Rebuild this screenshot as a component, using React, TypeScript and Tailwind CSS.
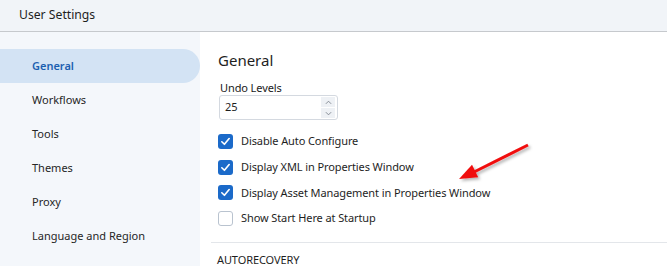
import React from "react";

const navItems = ["General", "Workflows", "Tools", "Themes", "Proxy", "Language and Region"];

const options = [
  { label: "Disable Auto Configure", checked: true },
  { label: "Display XML in Properties Window", checked: true },
  { label: "Display Asset Management in Properties Window", checked: true },
  { label: "Show Start Here at Startup", checked: false },
];

const Checkbox = ({ checked }: { checked: boolean }) =>
  checked ? (
    <span className="flex h-[15px] w-[15px] shrink-0 items-center justify-center rounded-[3px] bg-[#1b6ac9]">
      <svg width="11" height="11" viewBox="0 0 12 12" fill="none">
        <path d="M2 6.3L4.8 9L10 2.8" stroke="#fff" strokeWidth="1.8" strokeLinecap="round" strokeLinejoin="round" />
      </svg>
    </span>
  ) : (
    <span className="h-[15px] w-[15px] shrink-0 rounded-[3px] border border-[#b9c3cf] bg-white" />
  );

export default function App() {
  return (
    <div
      className="relative flex h-[266px] w-[667px] flex-col overflow-hidden bg-white text-[#1e1e1e]"
      style={{ fontFamily: '"Noto Sans", sans-serif' }}
    >
      <header className="flex h-[32px] shrink-0 items-center border-b border-[#c6c9cd] bg-[#f1f4f8] pl-[19px] text-[12.2px]">
        User Settings
      </header>
      <div className="flex flex-1">
        <nav className="flex w-[200px] shrink-0 flex-col bg-[#f4f7fb] pt-[17px]">
          {navItems.map((item, i) => (
            <div
              key={item}
              className={
                i === 0
                  ? "flex h-[34px] items-center rounded-r-[17px] bg-[#d3e3f4] pl-[32px] text-[11px] font-semibold text-[#1c5fb0]"
                  : "flex h-[34px] items-center pl-[32px] text-[11px] text-[#262626]"
              }
            >
              {item}
            </div>
          ))}
        </nav>
        <main className="flex flex-1 flex-col pl-[18px] pt-[17px] text-[11px] tracking-[-0.1px]">
          <h1 className="text-[15px] leading-[22px] tracking-normal text-[#1e1e1e]">General</h1>
          <label className="mt-[10px] pl-[2px] leading-[14px] text-[#1a1a1a]">Undo Levels</label>
          <div className="ml-[1px] flex h-[25px] w-[119px] items-center justify-between rounded-[3px] border border-[#d4d9e0] pl-[5px] pr-[2px]">
            <span>25</span>
            <div className="flex h-full flex-col justify-center gap-[1px] py-[1px]">
              <span className="flex h-[10px] w-[14px] items-center justify-center bg-[#eef1f5] text-[#7a808a]">
                <svg width="7" height="5" viewBox="0 0 8 5" fill="none">
                  <path d="M1 4L4 1L7 4" stroke="currentColor" strokeWidth="1" />
                </svg>
              </span>
              <span className="flex h-[10px] w-[14px] items-center justify-center bg-[#eef1f5] text-[#7a808a]">
                <svg width="7" height="5" viewBox="0 0 8 5" fill="none">
                  <path d="M1 1L4 4L7 1" stroke="currentColor" strokeWidth="1" />
                </svg>
              </span>
            </div>
          </div>
          <div className="mt-[14px] flex flex-col gap-[10.7px]">
            {options.map((o) => (
              <div key={o.label} className="flex h-[15px] items-center gap-[8px]">
                <Checkbox checked={o.checked} />
                <span>{o.label}</span>
              </div>
            ))}
          </div>
          <div className="-ml-[7px] mt-[15.5px] border-t border-[#e3e6ea]" />
          <div className="-ml-[1px] mt-[9px] leading-[16px]">AUTORECOVERY</div>
        </main>
      </div>
      <svg className="pointer-events-none absolute left-0 top-0" width="667" height="266">
        <defs>
          <filter id="sh" x="-20%" y="-30%" width="140%" height="160%">
            <feDropShadow dx="2" dy="2" stdDeviation="1.5" floodColor="#000" floodOpacity="0.3" />
          </filter>
        </defs>
        <g filter="url(#sh)">
          <line x1="528" y1="145" x2="474" y2="172" stroke="#f01010" strokeWidth="3" />
          <polygon points="459,179 478.2,177.3 472,164.7" fill="#f01010" />
        </g>
      </svg>
    </div>
  );
}
